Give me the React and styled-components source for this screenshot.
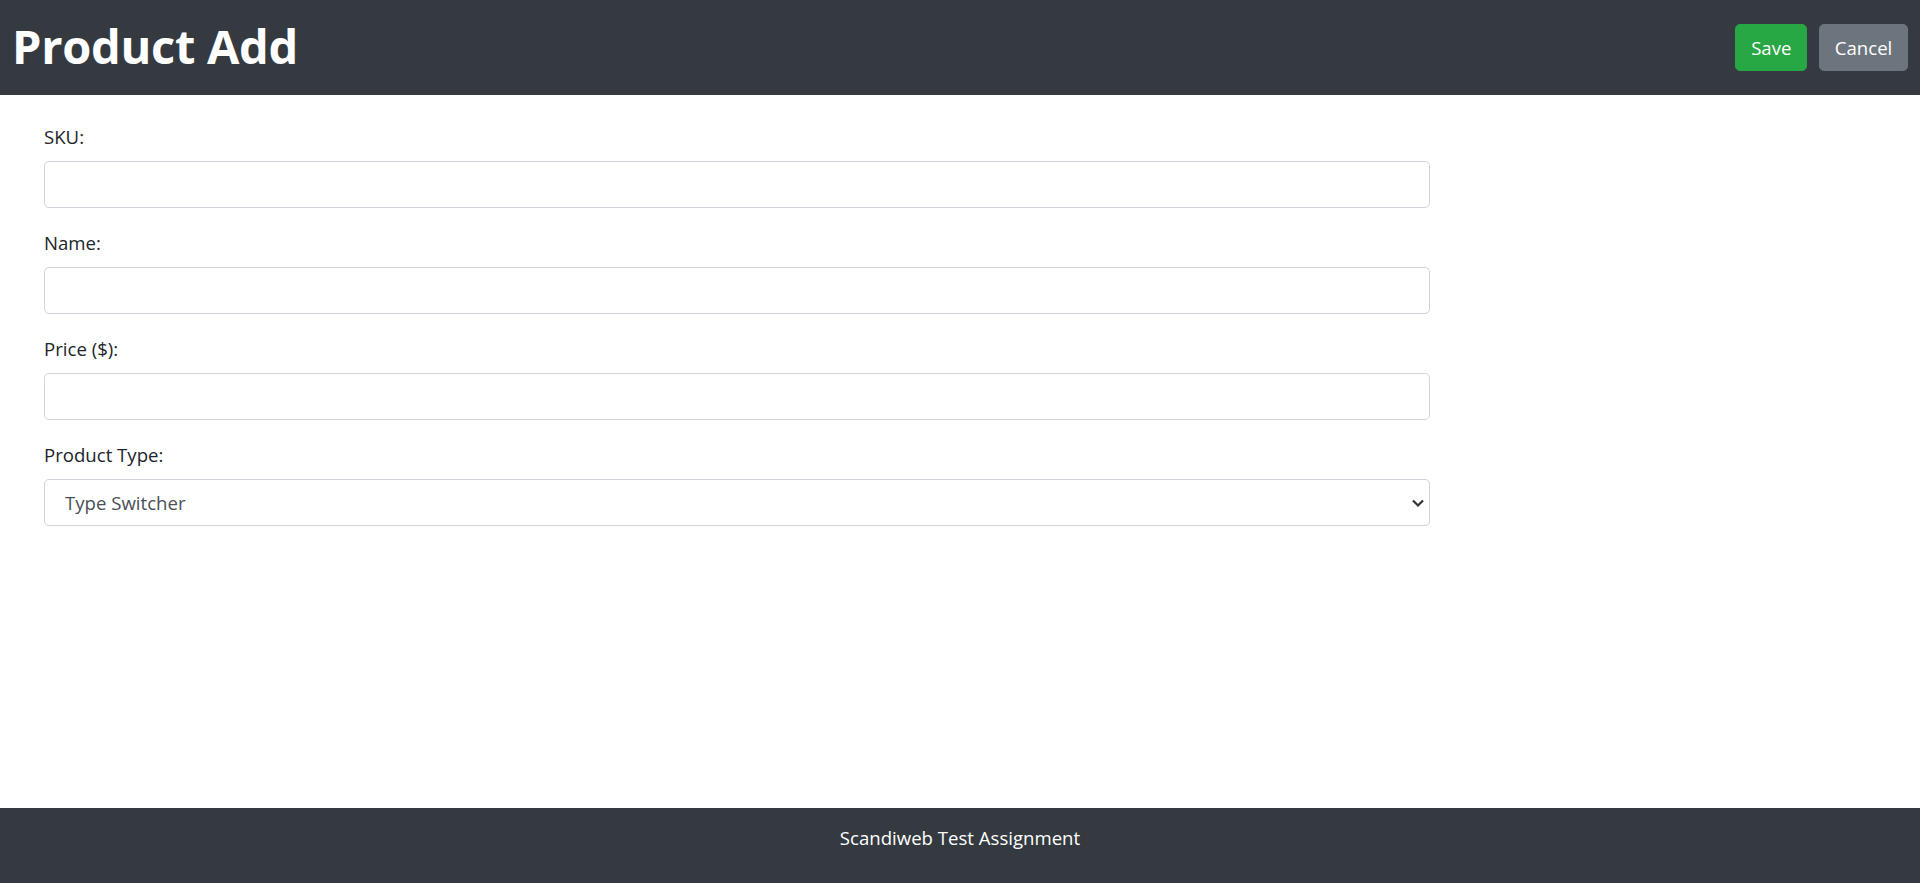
import React from 'react';
import styled, { createGlobalStyle } from 'styled-components';

const GlobalStyle = createGlobalStyle`
	* { box-sizing: border-box; }
	html, body {
		margin: 0;
		padding: 0;
		background: #fff;
		font-family: "Open Sans", "Noto Sans", "Liberation Sans", sans-serif;
		font-size: 19.6px;
		line-height: 1.5;
		color: #212529;
	}
`;

const Page = styled.div`
	display: flex;
	flex-direction: column;
	min-height: 100vh;
`;

const Header = styled.header`
	display: flex;
	align-items: center;
	justify-content: space-between;
	height: 95px;
	padding: 0 12px 0 12px;
	background: #343a40;
`;

const Title = styled.h1`
	margin: 0 0 3px;
	font-size: 47px;
	font-weight: 700;
	line-height: 1.2;
	color: #fff;
	letter-spacing: -0.3px;
`;

const Actions = styled.div`
	display: flex;
	gap: 12px;
`;

const Button = styled.button`
	height: 47px;
	padding: 0 14.7px;
	border: 1px solid ${p => p.$bg};
	border-radius: 4.9px;
	background: ${p => p.$bg};
	color: #fff;
	font-family: inherit;
	font-size: 18.6px;
	line-height: 1.5;
	cursor: pointer;
`;

const Main = styled.main`
	flex: 1;
	padding: 27px 44px 0;
`;

const Form = styled.form`
	width: 1386px;
`;

const Group = styled.div`
	margin-bottom: 19.8px;
`;

const Label = styled.label`
	display: block;
	margin-bottom: 9.8px;
	font-size: 18.6px;
	line-height: 29.4px;
	color: #212529;
`;

const Input = styled.input`
	display: block;
	width: 100%;
	height: 47px;
	padding: 0 14.7px;
	border: 1px solid #ced4da;
	border-radius: 4.9px;
	background: #fff;
	color: #495057;
	font-family: inherit;
	font-size: 18.6px;
	outline: none;
`;

const SelectWrap = styled.div`
	position: relative;
	& svg {
		position: absolute;
		right: 5px;
		top: 50%;
		transform: translateY(-50%);
		pointer-events: none;
	}
`;

const Select = styled.select`
	display: block;
	width: 100%;
	height: 47px;
	padding: 0 14.7px 0 20px;
	border: 1px solid #ced4da;
	border-radius: 4.9px;
	background: #fff;
	color: #495057;
	font-family: inherit;
	font-size: 18.6px;
	appearance: none;
	outline: none;
`;

const Footer = styled.footer`
	height: 75px;
	padding-top: 15px;
	background: #343a40;
	color: #fff;
	text-align: center;
	font-size: 18.6px;
	line-height: 29.4px;
`;

const Field = ({ label, id }) => (
	<Group>
		<Label htmlFor={id}>{label}</Label>
		<Input id={id} type="text" />
	</Group>
);

export default function App() {
	return (
		<Page>
			<GlobalStyle />
			<Header>
				<Title>Product Add</Title>
				<Actions>
					<Button $bg="#28a745">Save</Button>
					<Button $bg="#6c757d">Cancel</Button>
				</Actions>
			</Header>
			<Main>
				<Form id="product_form">
					<Field label="SKU:" id="sku" />
					<Field label="Name:" id="name" />
					<Field label="Price ($):" id="price" />
					<Group>
						<Label htmlFor="productType">Product Type:</Label>
						<SelectWrap>
							<Select id="productType" defaultValue="">
								<option value="">Type Switcher</option>
								<option value="DVD">DVD</option>
								<option value="Book">Book</option>
								<option value="Furniture">Furniture</option>
							</Select>
							<svg width="14" height="9" viewBox="0 0 14 9">
								<path d="M2 2 L7 7 L12 2" fill="none" stroke="#333" strokeWidth="2.2" />
							</svg>
						</SelectWrap>
					</Group>
				</Form>
			</Main>
			<Footer>Scandiweb Test Assignment</Footer>
		</Page>
	);
}
